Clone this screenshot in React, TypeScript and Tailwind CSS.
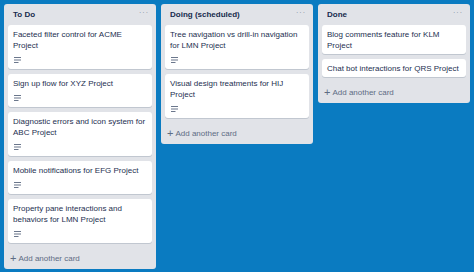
import React from 'react';

type Card = { title: string; desc?: boolean };
type List = { name: string; cards: Card[] };

const lists: List[] = [
  {
    name: 'To Do',
    cards: [
      { title: 'Faceted filter control for ACME Project', desc: true },
      { title: 'Sign up flow for XYZ Project', desc: true },
      { title: 'Diagnostic errors and icon system for ABC Project', desc: true },
      { title: 'Mobile notifications for EFG Project', desc: true },
      { title: 'Property pane interactions and behaviors for LMN Project', desc: true },
    ],
  },
  {
    name: 'Doing (scheduled)',
    cards: [
      { title: 'Tree navigation vs drill-in navigation for LMN Project', desc: true },
      { title: 'Visual design treatments for HIJ Project', desc: true },
    ],
  },
  {
    name: 'Done',
    cards: [
      { title: 'Blog comments feature for KLM Project' },
      { title: 'Chat bot interactions for QRS Project' },
    ],
  },
];

const DescIcon = () => (
  <svg width="7" height="6" viewBox="0 0 7 6" className="text-[#6b778c]">
    <rect x="0" y="0" width="7" height="1" fill="currentColor" />
    <rect x="0" y="2.5" width="7" height="1" fill="currentColor" />
    <rect x="0" y="5" width="4.5" height="1" fill="currentColor" />
  </svg>
);

const CardItem = ({ card }: { card: Card }) => (
  <div className="bg-white rounded-[3px] shadow-[0_1px_0_#c1c7d0] px-[5px] pt-[4px] pb-[3px]">
    <div className="text-[8px] leading-[11px] text-[#1d2f50]">{card.title}</div>
    {card.desc && (
      <div className="mt-[3px] h-[12px] flex items-center pl-[1px]">
        <DescIcon />
      </div>
    )}
  </div>
);

const ListColumn = ({ list }: { list: List }) => (
  <div className="w-[152px] shrink-0 bg-[#e1e3e8] rounded-[3px] px-[4px]">
    <div className="h-[21px] flex items-center justify-between pl-[5px] pr-[3px]">
      <span className="text-[8px] font-bold text-[#172b4d]">{list.name}</span>
      <span className="text-[7px] text-[#7a869a] tracking-[1px] -mt-[3px]">···</span>
    </div>
    <div className="flex flex-col gap-[5px]">
      {list.cards.map((c) => (
        <CardItem key={c.title} card={c} />
      ))}
    </div>
    <div className="h-[26px] pt-[5px] flex items-center pl-[2px] text-[8px] text-[#5e6c84]">
      <span className="text-[11px] leading-none mr-[2px] font-light">+</span>
      <span>Add another card</span>
    </div>
  </div>
);

export default function App() {
  return (
    <div
      className="w-[474px] h-[272px] bg-[#0a7bc1] flex items-start gap-[5px] p-[4px] overflow-hidden"
      style={{ fontFamily: '"Liberation Sans", Arial, sans-serif' }}
    >
      {lists.map((l) => (
        <ListColumn key={l.name} list={l} />
      ))}
    </div>
  );
}
